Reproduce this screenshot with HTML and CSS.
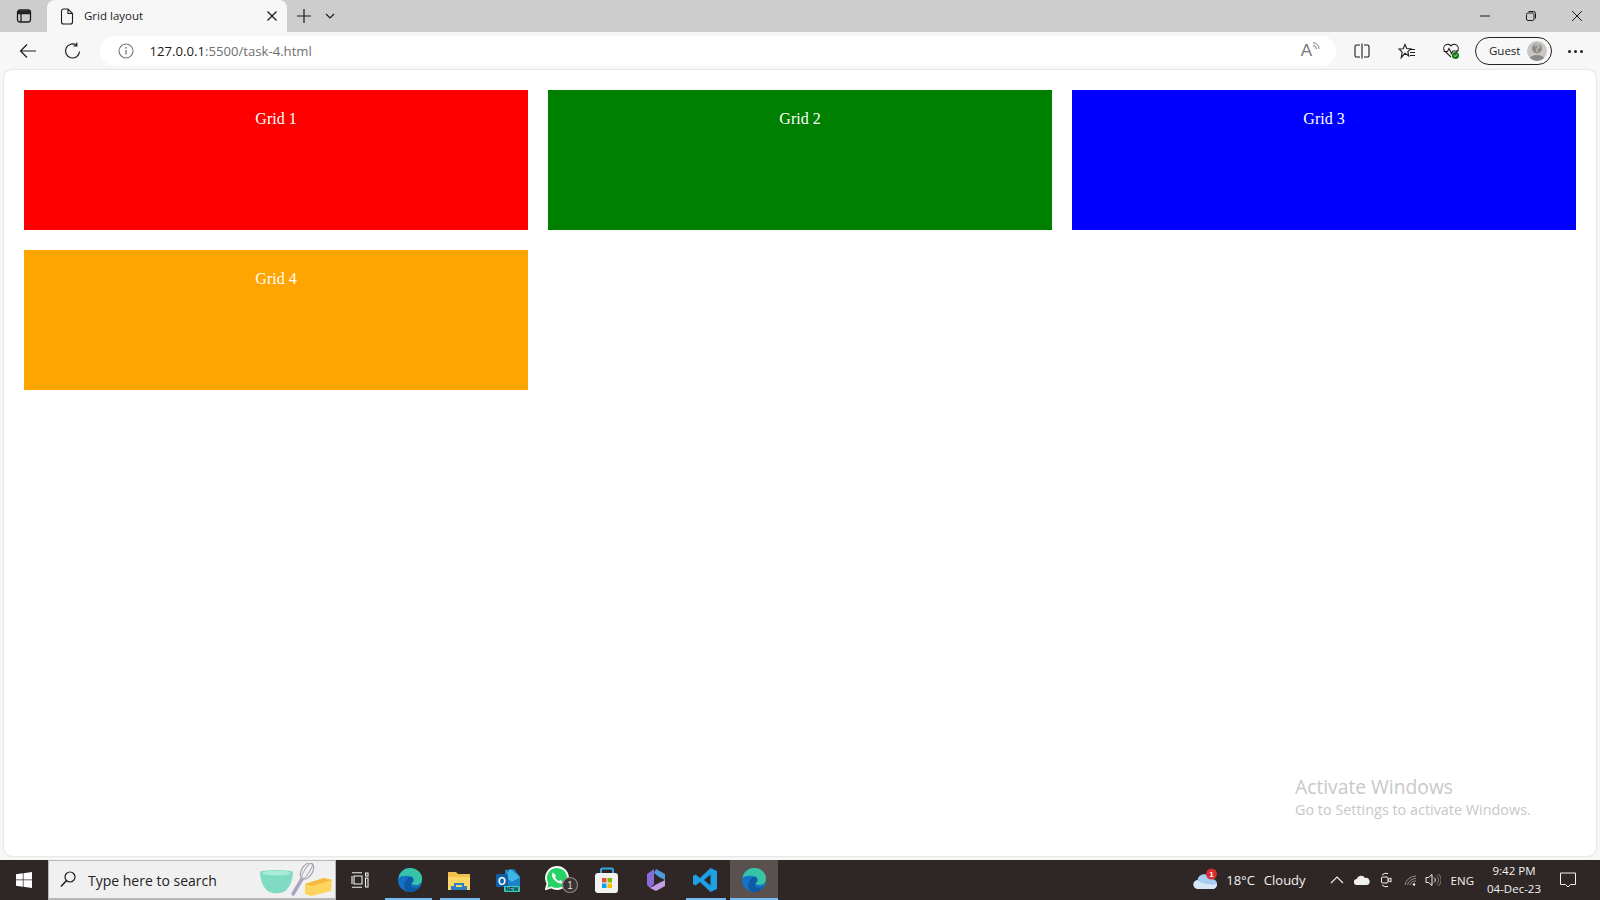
FILE: index.html
```html
<!DOCTYPE html>
<html lang="en">
<head>
<meta charset="utf-8">
<title>Grid layout</title>
<link rel="stylesheet" href="styles.css">
</head>
<body>
<div class="tabstrip">
  <div class="tab-toggle">
    <svg width="16" height="16" viewBox="0 0 16 16" class="ic"><rect x="1.5" y="2" width="13" height="12" rx="2.5" stroke-width="1.3"/><path d="M1.5 5.5h13M5 5.5V14" stroke-width="1.3"/><rect x="2" y="2.500" width="12" height="3" fill="#222" stroke="none"/></svg>
  </div>
  <div class="tab">
    <svg width="14" height="17" viewBox="0 0 14 17" class="ic"><path d="M1.500 3a2 2 0 0 1 2-2h4.500L12.500 5.500V14a2 2 0 0 1-2 2h-7a2 2 0 0 1-2-2zM8 1v4.500h4.500" stroke-width="1.100"/></svg>
    <span class="tab-title">Grid layout</span>
    <svg width="12" height="12" viewBox="0 0 12 12" class="ic tab-close"><path d="M1.500 1.500l9 9M10.500 1.500l-9 9" stroke-width="1.300"/></svg>
  </div>
  <svg width="16" height="16" viewBox="0 0 16 16" class="ic new-tab"><path d="M8 1v14M1 8h14" stroke-width="1.200"/></svg>
  <svg width="10" height="6" viewBox="0 0 10 6" class="ic tab-menu"><path d="M1 1l4 4 4-4" stroke-width="1.200"/></svg>
  <div class="win-controls">
    <svg width="12" height="12" viewBox="0 0 12 12" class="ic"><path d="M1 6h10" stroke-width="1"/></svg>
    <svg width="12" height="12" viewBox="0 0 12 12" class="ic"><rect x="1.500" y="3" width="7.500" height="7.500" rx="1.500" stroke-width="1"/><path d="M3.500 1.500h5A2 2 0 0 1 10.500 3.500v5" stroke-width="1"/></svg>
    <svg width="12" height="12" viewBox="0 0 12 12" class="ic"><path d="M1 1l10 10M11 1L1 11" stroke-width="1"/></svg>
  </div>
</div>
<div class="toolbar">
  <svg width="18" height="16" viewBox="0 0 18 16" class="ic back"><path d="M17 8H1.500M8 1.500L1.500 8 8 14.500" stroke-width="1.200"/></svg>
  <svg width="18" height="18" viewBox="0 0 18 18" class="ic reload"><path d="M15.500 9.500A7 7 0 1 1 12.500 3.200M12.800 .5v3.500H9.300" stroke-width="1.200"/></svg>
  <div class="address">
    <svg width="16" height="16" viewBox="0 0 16 16" class="info"><circle cx="8" cy="8" r="7" fill="none" stroke="#777" stroke-width="1.100"/><path d="M8 7v4.500" stroke="#777" stroke-width="1.300"/><circle cx="8" cy="4.800" r=".9" fill="#777"/></svg>
    <span class="url"><span class="url-host">127.0.0.1</span>:5500/task-4.html</span>
    <span class="read-aloud">A<svg width="8" height="9" viewBox="0 0 8 9" class="ic-gray"><path d="M1 .8a6 6 0 0 1 6 6M1 3.500a3.500 3.500 0 0 1 3.500 3.500" stroke-width="1"/></svg></span>
  </div>
  <svg width="16" height="16" viewBox="0 0 16 16" class="ic split"><path d="M6 2H2.500A1.500 1.500 0 0 0 1 3.500v9A1.500 1.500 0 0 0 2.500 14H6M10 2h3.500A1.500 1.500 0 0 1 15 3.500v9a1.500 1.500 0 0 1-1.500 1.500H10M8 .5v15" stroke-width="1.100"/></svg>
  <svg width="18" height="16" viewBox="0 0 18 16" class="ic favs"><path d="M7 1.500l1.800 4 4.200.4-3.200 2.800 1 4.300L7 10.300 3.200 14.700l1-5.500L1 6l4.200-.2zM12 6.500h5M12 9.500h5M12 12.500h5" stroke-width="1.100"/></svg>
  <svg width="18" height="18" viewBox="0 0 18 18" class="health"><path d="M9 15L2.500 8.800A4 4 0 0 1 9 4a4 4 0 0 1 6.500 4.800L13 11.500M1.500 9.500h4l1.500-3 2.500 5 1.500-2.500h5.500" fill="none" stroke="#222" stroke-width="1.100"/><circle cx="13.500" cy="13.500" r="3.500" fill="#107c10"/><path d="M12 13.500l1 1 2-2" fill="none" stroke="#fff" stroke-width=".9"/></svg>
  <div class="guest">
    <span class="guest-label">Guest</span>
    <svg width="20" height="20" viewBox="0 0 20 20" class="avatar"><defs><clipPath id="av"><circle cx="10" cy="10" r="10"/></clipPath></defs><circle cx="10" cy="10" r="10" fill="#c9c7c4"/><g clip-path="url(#av)"><ellipse cx="10" cy="19" rx="8" ry="5" fill="#8e8b87"/><circle cx="10" cy="7.500" r="5" fill="#8e8b87"/></g><text x="10" y="11" class="avatar-q">?</text></svg>
  </div>
  <span class="dots"><i></i><i></i><i></i></span>
</div>
<main class="page">
  <div class="grid">
    <div class="cell red">Grid 1</div>
    <div class="cell green">Grid 2</div>
    <div class="cell blue">Grid 3</div>
    <div class="cell orange">Grid 4</div>
  </div>
  <div class="activate">
    <div class="activate-title">Activate Windows</div>
    <div class="activate-sub">Go to Settings to activate Windows.</div>
  </div>
</main>
<footer class="taskbar">
  <div class="start">
    <svg width="16" height="16" viewBox="0 0 16 16"><path fill="#fff" d="M0 2.300l6.800-1v6.300H0zM7.500 1.200L16 0v7.600H7.500zM0 8.300h6.800v6.400L0 13.700zM7.500 8.300H16V16l-8.500-1.200z"/></svg>
  </div>
  <div class="search">
    <svg width="16" height="17" viewBox="0 0 16 17" class="ic search-ic"><circle cx="10" cy="6" r="5" stroke-width="1.200"/><path d="M6.500 9.500L1 15.500" stroke-width="1.500"/></svg>
    <span class="search-text">Type here to search</span>
    <svg width="76" height="36" viewBox="0 0 76 36" class="search-art">
      <path d="M2 8.500c8-2 25-2 33 0 0 9-4 19-11 21-3 1-8 1-11 0C6 27.500 2 17.500 2 8.500z" fill="#7fdcc3"/><ellipse cx="18.500" cy="10" rx="14" ry="2.500" fill="#a8ecd8"/>
      <path d="M35 31l9-15" stroke="#a9a5c0" stroke-width="3.500" stroke-linecap="round"/>
      <ellipse cx="49" cy="8" rx="5.500" ry="9" transform="rotate(32 49 8)" fill="none" stroke="#a9a5b5" stroke-width="1.300"/>
      <ellipse cx="49" cy="8" rx="2.500" ry="9" transform="rotate(32 49 8)" fill="none" stroke="#a9a5b5" stroke-width="1"/>
      <path d="M47 21l19-6 8 2-1 11-19 5-7-2z" fill="#fcd45e"/><path d="M47 21l19-6 8 2-20 6z" fill="#f6b93b"/>
    </svg>
  </div>
  <div class="task-item">
    <svg width="18" height="16" viewBox="0 0 18 16" class="ic-white task-view"><path d="M1 .8h10M1 15.200h10M3 4h8v8H3zM1 4v8M14.500 1h2.500v3h-2.500zM14.500 6h2.500v9h-2.500z" stroke-width="1.100"/></svg>
  </div>
  <div class="task-item run-partial">
    <svg width="26" height="26" viewBox="0 0 26 26"><use href="#edge"/></svg>
  </div>
  <div class="task-item run">
    <svg width="24" height="20" viewBox="0 0 24 20"><path d="M1 2h8l2 2h12v5H1z" fill="#f2c04c"/><path d="M1 7h22v13H1z" fill="#fbd768"/><path d="M7 13h10v3h3v4H4v-4h3z" fill="#2d80c8"/><path d="M9 15h6v2H9z" fill="#fbd768"/></svg>
  </div>
  <div class="task-item">
    <svg width="24" height="24" viewBox="0 0 24 24"><path d="M9 2l9-1 6 8v9L9 18z" fill="#1d82c6"/><path d="M14 1l10 8-8 5-7-5z" fill="#3fb4e6"/><rect y="6" width="12" height="13" rx="1.500" fill="#0f5ea8"/><text x="6" y="16.500" class="outlook-o">O</text><rect x="8" y="18" width="16" height="6" rx="1" fill="#36d0c0"/><text x="16" y="23" class="outlook-new">NEW</text></svg>
  </div>
  <div class="task-item">
    <svg width="34" height="28" viewBox="0 0 34 28" class="wa"><path d="M12 1a11 11 0 0 1 0 22q-3 0-5.500-1.500L1 23l1.500-5.500A11 11 0 0 1 12 1z" fill="#25d366" stroke="#fff" stroke-width="1.800"/><path d="M8 6.500c-2 2-1 5 2 8s6 4 8 2l-2.500-2.500-1.500 1c-1.500-.5-3.500-2.500-4-4l1-1.500z" fill="#fff"/><circle cx="25" cy="19" r="7.500" fill="#3a3533" stroke="#8b8785" stroke-width="1.200"/><text x="25" y="23" class="wa-count">1</text></svg>
  </div>
  <div class="task-item">
    <svg width="24" height="26" viewBox="0 0 24 26"><path d="M6 7V3a1.500 1.500 0 0 1 1.500-1.500h9A1.500 1.500 0 0 1 18 3v4" fill="none" stroke="#35a8e8" stroke-width="2"/><rect y="6" width="23" height="20" rx="3" fill="#f2f2f2"/><path d="M7 11h4.500v4.500H7z" fill="#e8522c"/><path d="M12.500 11H17v4.500h-4.500z" fill="#7fba00"/><path d="M7 16.500h4.500V21H7z" fill="#00a4ef"/><path d="M12.500 16.500H17V21h-4.500z" fill="#ffb900"/></svg>
  </div>
  <div class="task-item">
    <svg width="22" height="24" viewBox="0 0 22 24"><path d="M11 1l9 5v6l-6-3-5-4z" fill="#4f9be0"/><path d="M2 6l7-5v15l-4 4-3-3z" fill="#8a6cd8"/><path d="M20 12v6l-9 5-6-3 9-5z" fill="#c69be8"/><path d="M9 9l5 3-5 3z" fill="#2f2725"/></svg>
  </div>
  <div class="task-item run">
    <svg width="24" height="24" viewBox="0 0 24 24"><path d="M17.500 0L24 3v18l-6.500 3L7 14l-4.500 3.500L0 16v-8l2.500-1.500L7 10zM17.500 6.500L11 12l6.500 5.500z" fill="#1f9fe6"/></svg>
  </div>
  <div class="task-item active">
    <svg width="26" height="26" viewBox="0 0 26 26"><defs><g id="edge"><circle cx="13" cy="13" r="12" fill="#1572c4"/><path d="M1.500 11C3 4 8 1 13 1c7 0 12 5 12 11 0 4-3 6-6 6-2.500 0-4-1-4.500-2 3-1 3.500-5-.5-6.500C9 8 4 9 1.500 11z" fill="#36c4a8"/><path d="M14 10c3 1 2 5 .5 6-.5 1-2 3.500 2.500 4.500 3 .5 5-.5 6-2-2 5-7 6.500-10 6.500-5 0-7-5-5-10 1-3 4-5 6-5z" fill="#0c59a4"/><path d="M25 12c0-6-5-11-12-11 5 0 11 3 12 11z" fill="#7fdc5a"/></g></defs><use href="#edge"/></svg>
  </div>
  <div class="tray">
    <svg width="26" height="24" viewBox="0 0 26 24" class="weather"><path d="M5 21a4.500 4.500 0 0 1-.5-9A7 7 0 0 1 18 11a5 5 0 0 1 2 10z" fill="#a8cdf2"/><path d="M5 21a4.500 4.500 0 0 1-1-8.800c6 4 12 5 20 4a5 5 0 0 1-4 4.800z" fill="#d8e8f8"/><circle cx="18.500" cy="6" r="5.500" fill="#d92c2c"/><text x="18.500" y="9" class="weather-badge">1</text></svg>
    <span class="temp">18°C</span>
    <span class="cond">Cloudy</span>
    <svg width="14" height="8" viewBox="0 0 14 8" class="ic-white chev"><path d="M1 7l6-6 6 6" stroke-width="1.100"/></svg>
    <svg width="16" height="10" viewBox="0 0 16 10" class="cloud"><path d="M3 10a3 3 0 0 1-.3-6A4.500 4.500 0 0 1 11 3a3.500 3.500 0 0 1 2 7z" fill="#f0f0f0"/></svg>
    <svg width="12" height="16" viewBox="0 0 12 16" class="ic-white meet"><rect x="1.500" y="5" width="6.500" height="6" rx="1" stroke-width="1"/><path d="M8 7.500l3-1.500v4l-3-1.500M2 3a6 6 0 0 1 6-1.500M2 13a6 6 0 0 0 6 1.500" stroke-width="1"/></svg>
    <svg width="14" height="14" viewBox="0 0 14 14" class="ic-white wifi"><path d="M1 12a11 11 0 0 1 11-9M3.500 12a8.500 8.500 0 0 1 8.500-6.500M6 12a6 6 0 0 1 6-4" stroke-width=".8" stroke="#aaa"/><circle cx="10" cy="11.500" r="1.200" fill="#fff" stroke="none"/></svg>
    <svg width="16" height="14" viewBox="0 0 16 14" class="ic-white vol"><path d="M1 4.500h2.500L7 1.500v11l-3.500-3H1zM9 4.500a3 3 0 0 1 0 5" stroke-width="1"/><path d="M11.500 2.500a6 6 0 0 1 0 9M13.500 1a8 8 0 0 1 0 12" stroke-width=".8" stroke="#999"/></svg>
    <span class="eng">ENG</span>
    <div class="clock"><span>9:42 PM</span><span>04-Dec-23</span></div>
    <svg width="16" height="16" viewBox="0 0 16 16" class="ic-white notif"><path d="M.5 1h15v11.500h-5L8 15l-2.500-2.500h-5z" stroke-width="1"/></svg>
  </div>
</footer>
</body>
</html>
```
FILE: styles.css
```css
* { box-sizing: border-box; }
html, body { margin: 0; height: 100%; overflow: hidden; }
body { width: 1600px; height: 900px; display: flex; flex-direction: column; background: #f7f7f7; font-family: "Open Sans", "Noto Sans", sans-serif; }
svg { display: block; flex: none; }
.ic { fill: none; stroke: #1c1c1c; }
.ic-gray { fill: none; stroke: #777; }
.ic-white { fill: none; stroke: #f2f2f2; }

.tabstrip { height: 32px; background: #cdcdcd; display: flex; align-items: center; flex: none; }
.tab-toggle { width: 47px; display: flex; justify-content: center; }
.tab { width: 240px; height: 32px; background: #f7f7f7; border-radius: 8px 8px 0 0; display: flex; align-items: center; padding: 0 9px 0 13px; }
.tab-title { font-size: 11.500px; color: #1c1c1c; margin-left: 10px; padding-bottom: 2px; flex: 1; }
.new-tab { margin-left: 9px; }
.tab-menu { margin-left: 13px; }
.win-controls { margin-left: auto; display: flex; gap: 34px; padding-right: 17px; }

.toolbar { height: 38px; flex: none; display: flex; align-items: center; background: #f7f7f7; }
.back { margin-left: 19px; }
.reload { margin-left: 27px; }
.address { width: 1236px; height: 30px; margin-left: 18px; background: #fff; border-radius: 15px; display: flex; align-items: center; padding: 0 16px 0 18px; }
.url { font-size: 13.150px; color: #6f6f6f; margin-left: 15.500px; flex: 1; }
.url-host { color: #1a1a1a; }
.read-aloud { display: flex; color: #777; font-size: 17px; line-height: 18px; font-family: "Liberation Sans", sans-serif; }
.split { margin-left: 18px; }
.favs { margin-left: 28px; }
.health { margin-left: 26px; }
.guest { width: 77px; height: 28px; margin-left: 15px; border: 1px solid #222; border-radius: 14px; display: flex; align-items: center; padding: 0 4px 0 13px; justify-content: space-between; }
.guest-label { font-size: 11.500px; color: #1c1c1c; padding-bottom: 2px; }
.avatar-q { font: bold 10px "Liberation Sans", sans-serif; fill: #c9c7c4; text-anchor: middle; }
.dots { margin-left: 16px; display: flex; gap: 3px; }
.dots i { width: 3px; height: 3px; background: #222; border-radius: 50%; }

.page { position: relative; flex: none; height: 786px; margin: 0 4px; padding: 20px; background: #fff; border-radius: 8px; box-shadow: 0 0 2px rgba(0,0,0,.22); }
.grid { display: grid; grid-template-columns: repeat(3, 1fr); gap: 20px; }
.cell { height: 140px; padding-top: 20px; text-align: center; color: #fff; font: 16px/18px "Liberation Serif", serif; }
.red { background: #f00; }
.green { background: #008000; }
.blue { background: #00f; }
.orange { background: #ffa500; }
.activate { position: absolute; left: 1291px; top: 704px; color: #c8c8c8; }
.activate-title { font-size: 19.250px; line-height: 26px; }
.activate-sub { font-size: 14.400px; line-height: 20px; }

.taskbar { margin-top: auto; height: 40px; flex: none; background: #2f2725; display: flex; align-items: center; color: #f2f2f2; }
.start { width: 48px; display: flex; justify-content: center; }
.search { width: 288px; height: 40px; background: #f0f0f0; border: 1px solid #b8b8b8; border-bottom-width: 2px; display: flex; align-items: center; padding-left: 11px; position: relative; }
.search-text { font-size: 14px; color: #222; margin-left: 12px; padding-top: 2px; }
.search-art { position: absolute; right: 1px; top: 2px; }
.task-item { width: 49.250px; height: 40px; display: flex; align-items: center; justify-content: center; position: relative; }
.task-view { margin-right: 2px; }
.run::after, .run-partial::after, .active::after { content: ""; position: absolute; left: 5px; right: 4px; bottom: 0; height: 2px; background: #76b9ed; }
.run-partial::after { left: 0; right: 3px; }
.active { width: 48px; background: #5a514f; }
.active::after { left: 0; right: 0; }
.wa { margin-left: 9px; }
.outlook-o { font: bold 10px "Liberation Sans", sans-serif; fill: #fff; text-anchor: middle; }
.outlook-new { font: bold 5.500px "Liberation Sans", sans-serif; fill: #123; text-anchor: middle; }
.wa-count { font: 10px "Liberation Sans", sans-serif; fill: #ddd; text-anchor: middle; }
.tray { margin-left: auto; display: flex; align-items: center; font-size: 13px; }
.weather { margin-right: 7px; }
.weather-badge { font: bold 8px "Liberation Sans", sans-serif; fill: #fff; text-anchor: middle; }
.cond { margin-left: 9px; }
.chev { margin-left: 24px; }
.cloud { margin-left: 10px; }
.meet { margin-left: 10px; }
.wifi { margin-left: 12px; }
.vol { margin-left: 7px; }
.eng { margin-left: 10px; font-size: 11.500px; }
.clock { width: 78px; margin-left: 1px; display: flex; flex-direction: column; align-items: center; font-size: 11.500px; line-height: 18px; }
.notif { margin: 0 24px 0 7px; }
```
